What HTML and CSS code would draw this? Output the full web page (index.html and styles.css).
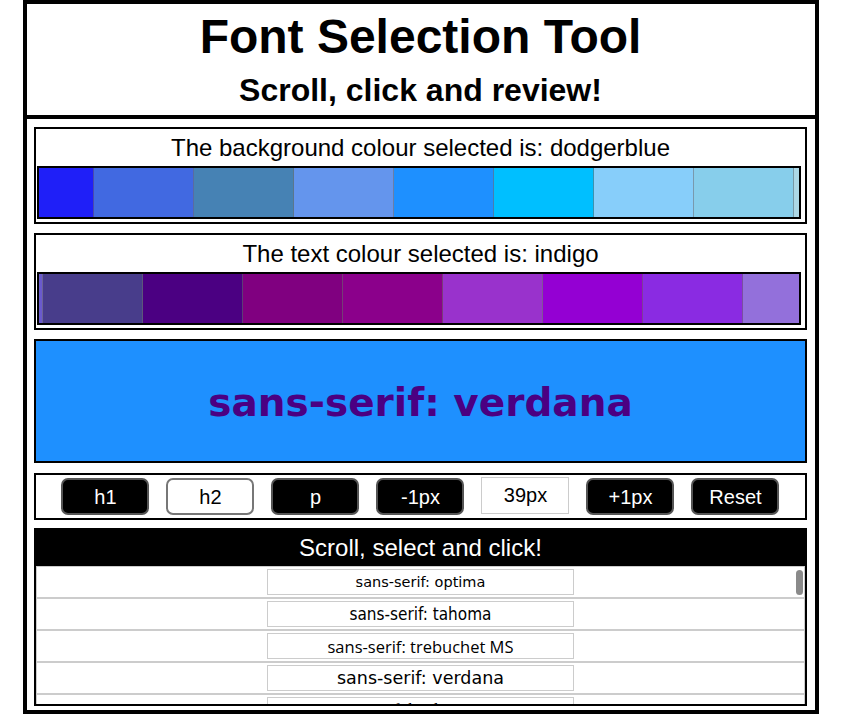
FILE: index.html
```html
<!DOCTYPE html>
<html lang="en">
<head>
<meta charset="utf-8">
<title>Font Selection Tool</title>
<link rel="stylesheet" href="styles.css">
</head>
<body>
<div class="app">
  <header class="app-header">
    <h1 class="title">Font Selection Tool</h1>
    <h2 class="subtitle">Scroll, click and review!</h2>
  </header>
  <main class="app-main">
    <section class="panel colour-panel">
      <p class="panel-label">The background colour selected is: dodgerblue</p>
      <div class="palette" id="bg-palette">
        <span class="swatch" style="background:navy"></span>
        <span class="swatch" style="background:darkblue"></span>
        <span class="swatch" style="background:mediumblue"></span>
        <span class="swatch" style="background:#1f1ff8"></span>
        <span class="swatch" style="background:royalblue"></span>
        <span class="swatch" style="background:steelblue"></span>
        <span class="swatch" style="background:cornflowerblue"></span>
        <span class="swatch" style="background:dodgerblue"></span>
        <span class="swatch" style="background:deepskyblue"></span>
        <span class="swatch" style="background:lightskyblue"></span>
        <span class="swatch" style="background:skyblue"></span>
        <span class="swatch" style="background:lightblue"></span>
        <span class="swatch" style="background:powderblue"></span>
        <span class="swatch" style="background:lightsteelblue"></span>
      </div>
    </section>
    <section class="panel colour-panel">
      <p class="panel-label">The text colour selected is: indigo</p>
      <div class="palette" id="text-palette">
        <span class="swatch" style="background:mediumslateblue"></span>
        <span class="swatch" style="background:slateblue"></span>
        <span class="swatch" style="background:darkslateblue"></span>
        <span class="swatch" style="background:indigo"></span>
        <span class="swatch" style="background:purple"></span>
        <span class="swatch" style="background:darkmagenta"></span>
        <span class="swatch" style="background:darkorchid"></span>
        <span class="swatch" style="background:darkviolet"></span>
        <span class="swatch" style="background:blueviolet"></span>
        <span class="swatch" style="background:mediumpurple"></span>
        <span class="swatch" style="background:plum"></span>
        <span class="swatch" style="background:violet"></span>
        <span class="swatch" style="background:orchid"></span>
      </div>
    </section>
    <section class="panel preview">
      <p class="preview-text">sans-serif: verdana</p>
    </section>
    <section class="panel controls">
      <button class="btn">h1</button>
      <button class="btn btn-active">h2</button>
      <button class="btn">p</button>
      <button class="btn">-1px</button>
      <span class="size-display">39px</span>
      <button class="btn">+1px</button>
      <button class="btn">Reset</button>
    </section>
    <section class="panel list-panel">
      <div class="list-header">Scroll, select and click!</div>
      <ul class="font-list">
        <li class="font-row"><span class="font-item f-optima">sans-serif: optima</span></li>
        <li class="font-row"><span class="font-item f-tahoma">sans-serif: tahoma</span></li>
        <li class="font-row"><span class="font-item f-trebuchet">sans-serif: trebuchet MS</span></li>
        <li class="font-row"><span class="font-item f-verdana">sans-serif: verdana</span></li>
        <li class="font-row"><span class="font-item f-serif">serif: bookman</span></li>
      </ul>
      <span class="scroll-thumb"></span>
    </section>
  </main>
</div>
<script src="app.js"></script>
</body>
</html>
```

FILE: styles.css
```css
* {
  box-sizing: border-box;
}

html, body {
  margin: 0;
  padding: 0;
  background: #fff;
}

body {
  font-family: "Liberation Sans", Arial, Helvetica, sans-serif;
  color: #000;
}

.app {
  width: 796px;
  height: 714px;
  margin: 0 auto;
  border: 4px solid #000;
  display: flex;
  flex-direction: column;
  overflow: hidden;
}

.app-header {
  flex: 0 0 115px;
  border-bottom: 4px solid #000;
  padding-top: 6px;
  text-align: center;
}

.title {
  margin: 0;
  font-size: 48px;
  line-height: 54px;
  font-weight: bold;
}

.subtitle {
  margin: 8px 0 0;
  font-size: 32px;
  line-height: 36px;
  font-weight: bold;
}

.app-main {
  flex: 1;
  min-height: 0;
  display: flex;
  flex-direction: column;
}

.panel {
  width: 98%;
  margin: 9px auto 0;
  border: 2px solid #000;
  flex: 0 0 auto;
}

.colour-panel:first-child {
  margin-top: 8px;
}

.panel-label {
  margin: 0;
  padding-top: 5px;
  padding-bottom: 4px;
  font-size: 24px;
  line-height: 28px;
  text-align: center;
}

.palette {
  display: flex;
  overflow: hidden;
  margin: 0 4px 3px 1px;
  border: 2px solid #000;
}

.swatch {
  flex: 0 0 100px;
  height: 49px;
  border-right: 1px solid rgba(110, 110, 110, 0.55);
}

.preview {
  height: 124px;
  background: dodgerblue;
  display: flex;
  align-items: center;
  justify-content: center;
}

.preview-text {
  margin: 0;
  padding-top: 3px;
  font-family: "DejaVu Sans", Verdana, sans-serif;
  font-weight: bold;
  font-size: 39px;
  color: indigo;
}

.controls {
  margin-top: 10px;
  padding: 3px 0;
  display: flex;
  justify-content: center;
  gap: 17px;
}

.btn {
  width: 88px;
  height: 37px;
  padding: 0;
  background: #000;
  color: #fff;
  border: 2px solid #555;
  border-radius: 7px;
  font-family: "Liberation Sans", Arial, Helvetica, sans-serif;
  font-size: 20px;
  line-height: 1;
}

.btn-active {
  background: #fff;
  color: #000;
  border-color: #777;
}

.size-display {
  width: 88px;
  height: 37px;
  border: 1px solid #ccc;
  display: flex;
  align-items: center;
  justify-content: center;
  font-size: 20px;
  margin-top: -1px;
}

.list-panel {
  position: relative;
  flex: 1 1 auto;
  min-height: 0;
  margin-top: 8px;
  margin-bottom: 4px;
  display: flex;
  flex-direction: column;
}

.list-header {
  flex: 0 0 36px;
  background: #000;
  color: #fff;
  font-size: 24px;
  line-height: 36px;
  text-align: center;
}

.font-list {
  flex: 1;
  min-height: 0;
  margin: 0;
  padding: 0;
  list-style: none;
  overflow: hidden;
}

.scroll-thumb {
  position: absolute;
  top: 40px;
  right: 2px;
  width: 7px;
  height: 25px;
  border-radius: 4px;
  background: #8a8a8a;
}

.font-row {
  height: 32px;
  border: 1px solid #ccc;
  display: flex;
  align-items: center;
  justify-content: center;
}

.font-item {
  width: 40%;
  height: 26px;
  border: 1px solid #ccc;
  display: flex;
  align-items: center;
  justify-content: center;
  white-space: nowrap;
  color: #000;
}

.f-optima {
  font-family: "DejaVu Sans", sans-serif;
  font-size: 14.5px;
}

.f-tahoma {
  font-family: "DejaVu Sans Condensed", "DejaVu Sans", sans-serif;
  font-size: 17px;
}

.f-trebuchet {
  font-family: "Open Sans", sans-serif;
  font-size: 16.5px;
}

.f-verdana {
  font-family: "DejaVu Sans", Verdana, sans-serif;
  font-size: 17.5px;
}

.f-serif {
  font-family: "Liberation Serif", serif;
  font-size: 17px;
}
```

FILE: app.js
```js
document.getElementById('bg-palette').scrollLeft = 345;
document.getElementById('text-palette').scrollLeft = 196;
```
